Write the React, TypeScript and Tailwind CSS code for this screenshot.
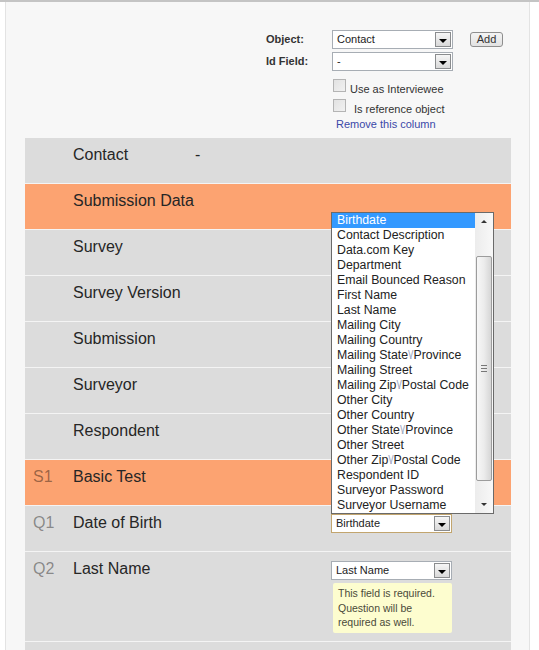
import React from "react";

function DropButton() {
  return (
    <div className="ml-auto mr-px flex h-[15px] w-[16px] items-center justify-center border border-[#8a8c8e] bg-gradient-to-b from-[#f6f6f6] to-[#d9d9d9]">
      <div className="mt-[3px] h-0 w-0 border-l-[4px] border-r-[4px] border-t-[4px] border-l-transparent border-r-transparent border-t-black" />
    </div>
  );
}

function Select({ value, focus = false }: { value: string; focus?: boolean }) {
  return (
    <div
      className={
        "flex h-[19px] w-[121px] items-center bg-white " +
        (focus ? "border border-[#c2a56e]" : "border border-[#a7adb4]")
      }
    >
      <span className="pl-[4px] text-[11px] leading-[13px] text-[#222]">{value}</span>
      <DropButton />
    </div>
  );
}

function Checkbox() {
  return <div className="h-[13px] w-[13px] shrink-0 border border-[#b4b4b4] bg-gradient-to-br from-[#e2e2e2] to-[#f1f1f1]" />;
}

const listItems = [
  "Birthdate",
  "Contact Description",
  "Data.com Key",
  "Department",
  "Email Bounced Reason",
  "First Name",
  "Last Name",
  "Mailing City",
  "Mailing Country",
  "Mailing State|Province",
  "Mailing Street",
  "Mailing Zip|Postal Code",
  "Other City",
  "Other Country",
  "Other State|Province",
  "Other Street",
  "Other Zip|Postal Code",
  "Respondent ID",
  "Surveyor Password",
  "Surveyor Username",
];

function ItemText({ text }: { text: string }) {
  const parts = text.split("|");
  if (parts.length === 1) return <>{text}</>;
  return (
    <>
      {parts[0]}
      <span className="tracking-[-1.5px] text-[#a3abc4]">{"\\/"}</span>
      <span className="ml-[1.5px]">{parts[1]}</span>
    </>
  );
}

function OpenList() {
  return (
    <div className="absolute bottom-full left-0 z-10 flex h-[302px] w-[163px] border border-[#6a6a6a] bg-white">
      <div className="flex w-[143px] flex-col">
        {listItems.map((t, i) => (
          <div
            key={t}
            className={
              "h-[15px] whitespace-nowrap pl-[5px] text-[12.3px] leading-[15px] " +
              (i === 0 ? "bg-[#3399ff] text-white" : "text-[#222]")
            }
          >
            <ItemText text={t} />
          </div>
        ))}
      </div>
      <div className="flex w-[18px] flex-col bg-gradient-to-r from-[#ececec] to-[#f8f8f8]">
        <div className="flex h-[17px] items-center justify-center">
          <div className="h-0 w-0 border-b-[3px] border-l-[3px] border-r-[3px] border-b-[#333] border-l-transparent border-r-transparent" />
        </div>
        <div className="h-[26px]" />
        <div className="mx-[1px] flex h-[225px] items-center justify-center rounded-[2px] border border-[#9c9c9c] bg-gradient-to-r from-[#f7f7f7] via-[#ececec] to-[#d6d6d6]">
          <div className="flex flex-col gap-[2px]">
            <div className="h-px w-[6px] bg-[#777]" />
            <div className="h-px w-[6px] bg-[#777]" />
            <div className="h-px w-[6px] bg-[#777]" />
          </div>
        </div>
        <div className="flex-1" />
        <div className="flex h-[17px] items-center justify-center">
          <div className="h-0 w-0 border-l-[3px] border-r-[3px] border-t-[3px] border-l-transparent border-r-transparent border-t-[#333]" />
        </div>
      </div>
    </div>
  );
}

type Row = {
  code?: string;
  label: string;
  orange?: boolean;
  dash?: boolean;
  kind?: "open" | "tip";
  h?: string;
};

const rows: Row[] = [
  { label: "Contact", dash: true },
  { label: "Submission Data", orange: true },
  { label: "Survey" },
  { label: "Survey Version" },
  { label: "Submission" },
  { label: "Surveyor" },
  { label: "Respondent" },
  { code: "S1", label: "Basic Test", orange: true },
  { code: "Q1", label: "Date of Birth", kind: "open" },
  { code: "Q2", label: "Last Name", kind: "tip", h: "h-[90px]" },
];

export default function App() {
  return (
    <div className="h-[650px] w-[539px] overflow-hidden bg-white font-['Liberation_Sans',Arial,sans-serif]">
      <div className="h-[2px] bg-[#c4c4c4]" />
      <div className="ml-[5px] h-[648px] w-[525px] border-x border-[#e3e3e3] bg-[#f7f7f7] pl-[19px]">
        {/* header controls */}
        <div className="h-[136px] pl-[241px] pt-[28px]">
          <div className="flex h-[19px] items-center">
            <span className="w-[66px] text-[11px] font-bold text-[#333]">Object:</span>
            <Select value="Contact" />
            <button className="ml-[17px] flex h-[15px] w-[33px] items-center justify-center rounded-[3px] border border-[#8e8e8e] bg-gradient-to-b from-[#f4f4f4] to-[#e2e2e2] text-[11px] leading-[13px] text-[#333]">
              Add
            </button>
          </div>
          <div className="mt-[3px] flex h-[19px] items-center">
            <span className="w-[66px] text-[11px] font-bold text-[#333]">Id Field:</span>
            <Select value="-" />
          </div>
          <div className="mt-[8px] flex items-start pl-[67px]">
            <Checkbox />
            <span className="ml-[4px] pt-[4px] text-[11px] leading-[13px] text-[#333]">Use as Interviewee</span>
          </div>
          <div className="mt-[3px] flex items-start pl-[67px]">
            <Checkbox />
            <span className="ml-[8px] pt-[4px] text-[11px] leading-[13px] text-[#333]">Is reference object</span>
          </div>
          <div className="mt-[2px] pl-[70px] text-[11px] leading-[13px] text-[#3a48a8]">Remove this column</div>
        </div>

        {/* table */}
        <div className="w-[486px]">
          {rows.map((r) => (
            <div
              key={r.label}
              className={
                "flex border-b border-[#f4f4f4] " +
                (r.h ?? "h-[46px]") +
                " " +
                (r.orange ? "bg-[#fca371]" : "bg-[#dcdcdc]")
              }
            >
              <div className="w-[48px] pl-[8px] pt-[7px] text-[16px] leading-[20px] text-[rgba(0,0,0,0.4)]">
                {r.code ?? ""}
              </div>
              <div className="w-[122px] whitespace-nowrap pt-[7px] text-[16px] leading-[20px] text-[#262626]">
                {r.label}
              </div>
              <div className="w-[136px] pt-[7px] text-[16px] leading-[20px] text-[#262626]">{r.dash ? "-" : ""}</div>
              <div className="flex-1 pt-[8px]">
                {r.kind === "open" && (
                  <div className="relative w-[121px]">
                    <OpenList />
                    <Select value="Birthdate" focus />
                  </div>
                )}
                {r.kind === "tip" && (
                  <div className="pt-[1px]">
                    <Select value="Last Name" />
                    <div className="ml-[2px] mt-[3px] h-[50px] w-[119px] rounded-[2px] bg-[#fdfdcf] pl-[5px] pt-[3px] text-[10.5px] leading-[14.5px] text-[#4a4a3a]">
                      This field is required.
                      <br />
                      Question will be
                      <br />
                      required as well.
                    </div>
                  </div>
                )}
              </div>
            </div>
          ))}
          <div className="h-[20px] bg-[#dcdcdc]" />
        </div>
      </div>
    </div>
  );
}
